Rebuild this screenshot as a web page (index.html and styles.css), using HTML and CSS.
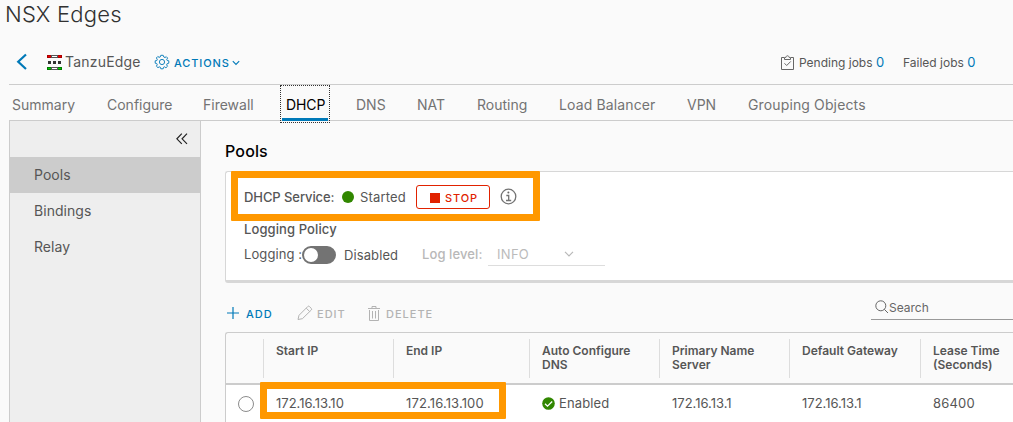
FILE: index.html
```html
<!DOCTYPE html>
<html lang="en">
<head>
<meta charset="utf-8">
<title>NSX Edges</title>
<link rel="stylesheet" href="styles.css">
</head>
<body>
<h1 class="title">NSX Edges</h1>
<header class="toolbar">
  <svg class="back" width="12" height="18" viewBox="0 0 12 18"><path d="M10 1.5 2.2 8.8 10 16" fill="none" stroke="#0079b8" stroke-width="2.2"/></svg>
  <svg class="edge-icon" width="15" height="15" viewBox="0 0 15 15" shape-rendering="crispEdges"><path fill="#a00" d="M0 0h15v3H0z"/><path fill="#e00" d="M1 1h3v1H1zM11 1h3v1h-3z"/><path fill="#555" d="M4 0h7v3H4z"/><path fill="#fff" d="M5 1h5v1H5z"/><path fill="#333" d="M1 6h3v3H1zM6 6h3v3H6zM11 6h3v3h-3z"/><path fill="#070" d="M0 12h15v3H0z"/><path fill="#0c0" d="M1 13h3v1H1zM11 13h3v1h-3z"/><path fill="#555" d="M4 12h7v3H4z"/><path fill="#fff" d="M5 13h5v1H5z"/></svg>
  <span class="edge-name">TanzuEdge</span>
  <svg class="gear" width="16" height="16" viewBox="-8 -8 16 16" fill="none" stroke="#1683bd"><path d="M-1.2-6.7 1.2-6.7 1.8-5 3.1-4.4 4.2-5.4 5.7-3.9 4.7-2.8 5.2-1.5 6.8-1.2 6.8 1.2 5.2 1.6 4.6 3 5.6 4.2 3.9 5.8 2.8 4.8 1.5 5.3 1.2 6.8-1.2 6.8-1.6 5.3-2.8 4.8-4 5.7-5.7 4.1-4.7 2.9-5.3 1.5-6.8 1.2-6.8-1.2-5.2-1.5-4.7-2.8-5.7-4-4.1-5.6-3-4.6-1.7-5.1z"/><circle r="2.6"/></svg>
  <span class="actions">ACTIONS</span>
  <svg class="caret" width="8" height="6" viewBox="0 0 8 6"><path d="M.8 1.2 4 4.4 7.2 1.2" fill="none" stroke="#0079b8" stroke-width="1.1"/></svg>
  <div class="jobs">
    <svg width="13" height="15" viewBox="0 0 13 15" fill="none" stroke="#666"><path d="M3 2.5H.5v12h12v-12H10M3.5 4.5v-2h1.3C5.2.2 7.8.2 8.200 2.500h1.300v2zM3.500 8.300 5.700 10.500 9.800 6.400"/></svg>
    <span class="pending">Pending jobs <b>0</b></span>
    <span class="failed">Failed jobs <b>0</b></span>
  </div>
</header>
<nav class="tabs">
  <a>Summary</a><a>Configure</a><a>Firewall</a><a class="active">DHCP</a><a>DNS</a><a>NAT</a><a>Routing</a><a class="wide">Load Balancer</a><a>VPN</a><a class="wide">Grouping Objects</a>
</nav>
<div class="body">
  <aside class="side">
    <div class="collapse"><svg width="12" height="12" viewBox="0 0 12 12" fill="none" stroke="#222" stroke-width="1.2"><path d="M5.800.700.900 5.800l4.900 5.100M11 .700 6.100 5.800 11 10.900"/></svg></div>
    <a class="selected">Pools</a><a>Bindings</a><a>Relay</a>
  </aside>
  <main class="main">
    <h2>Pools</h2>
    <section class="card">
      <div class="service">
        <span class="service-label">DHCP Service:</span><i class="dot"></i><span class="started">Started</span>
        <button class="stop"><i></i>STOP</button>
        <svg class="info" width="17" height="17" viewBox="0 0 17 17" fill="none" stroke="#737373" stroke-width="1.300"><circle cx="8.500" cy="8.500" r="7.300"/><path d="M6.300 7.500h2.400v5M6 12.500h5.200"/><circle cx="8.400" cy="4.600" r="1" fill="#666" stroke="none"/></svg>
      </div>
      <div class="policy">Logging Policy</div>
      <div class="logging">
        <span class="log-label">Logging :</span><i class="toggle"></i><span class="disabled">Disabled</span>
        <span class="level-label">Log level:</span>
        <span class="select">INFO<svg width="10" height="6" viewBox="0 0 10 6"><path d="M1 .800 5 4.800 9 .800" fill="none" stroke="#b8b8b8" stroke-width="1.200"/></svg></span>
      </div>
    </section>
    <div class="grid-actions">
      <svg class="plus" width="12" height="12" viewBox="0 0 12 12"><path d="M6 0v12M0 6h12" stroke="#0079b8" stroke-width="1.200"/></svg><span class="add">ADD</span>
      <svg class="pencil" width="16" height="16" viewBox="0 0 16 16" fill="none" stroke="#b3b3b3"><path d="M1 14.500 2 10.300 10.800 1.500q.8-.8 1.600 0l1.900 1.900q.8.800 0 1.600L5.400 13.700zM9.300 3.200l3.400 3.400"/></svg><span class="edit">EDIT</span>
      <svg class="trash" width="12" height="15" viewBox="0 0 12 15" fill="none" stroke="#b3b3b3"><path d="M0 2.500h12M4 2V.500h4V2M1.500 4v10.500h9V4M4.500 5v7.500M7.500 5v7.500"/></svg><span class="delete">DELETE</span>
      <div class="search"><svg width="14" height="14" viewBox="0 0 14 14" fill="none" stroke="#666"><circle cx="5.800" cy="5.800" r="5"/><path d="M9.300 9.300 13 13"/></svg>Search</div>
    </div>
    <div class="table">
      <div class="row head">
        <div></div><div>Start IP</div><div>End IP</div><div>Auto Configure<br>DNS</div><div>Primary Name<br>Server</div><div>Default Gateway</div><div>Lease Time<br>(Seconds)</div>
      </div>
      <div class="row data">
        <div class="pick"><i></i></div><div>172.16.13.10</div><div class="range-end">172.16.13.100</div>
        <div class="status"><svg width="13" height="13" viewBox="0 0 13 13"><circle cx="6.500" cy="6.500" r="6.300" fill="#318700"/><path d="M3 6.700 5.500 9.200 10.200 4.500" fill="none" stroke="#fff" stroke-width="1.300"/></svg><span>Enabled</span></div>
        <div>172.16.13.1</div><div>172.16.13.1</div><div class="lease">86400</div>
      </div>
    </div>
  </main>
</div>
<div class="mark mark-service"></div>
<div class="mark mark-range"></div>
</body>
</html>
```
FILE: styles.css
```css
* { box-sizing: border-box; }
body { margin: 0; width: 1013px; height: 422px; overflow: hidden; position: relative; background: #fafafa; color: #565656; font-family: Inter, "Liberation Sans", sans-serif; font-size: 13px; }
svg { display: block; flex: none; }
span, a { white-space: nowrap; }
.title { margin: 0; height: 40px; padding-left: 5px; font-size: 22px; font-weight: 300; line-height: 28px; color: #313131; letter-spacing: .2px; }
.toolbar { height: 45px; margin-left: 9px; border-bottom: 1px solid #ccc; display: flex; align-items: center; }
.back { margin-left: 7px; }
.edge-icon { margin-left: 19px; }
.edge-name { margin: -1px 0 0 3px; width: 75px; font-size: 14px; letter-spacing: .2px; }
.gear { margin-left: 14px; }
.actions { margin: 1px 0 0 4px; width: 56px; font-size: 11px; font-weight: 500; letter-spacing: .9px; color: #0079b8; }
.caret { margin: 1px 0 0 2px; }
.jobs { margin: -1px 36px 0 auto; display: flex; align-items: center; font-size: 12px; }
.jobs svg { margin-top: 1px; }
.jobs b { font-weight: 400; color: #0079b8; font-size: 13px; }
.pending { margin-left: 5px; width: 104px; }
.failed { width: 74px; }
.tabs { height: 36px; margin-left: 9px; padding-left: 3px; border-bottom: 1px solid #ccc; display: grid; grid-template-columns: 95px 96px 77px 76px 61px 60px 82px 128px 61px 130px; line-height: 40px; font-size: 14px; color: #737373; }
.tabs a { height: 35px; }
.tabs .wide { letter-spacing: .13px; }
.tabs .active { width: 50px; height: 38px; padding-left: 5px; color: #000; border: 1px dotted #333; line-height: 38px; letter-spacing: -.1px; background: linear-gradient(#0079b8, #0079b8) 1px 32px / 46px 3px no-repeat; }
.body { display: flex; height: 301px; margin-left: 9px; }
.side { width: 192px; flex: none; border: solid #ccc; border-width: 0 1px; background: #eee; }
.side a { display: block; height: 36px; padding-left: 24px; line-height: 36px; font-size: 14px; letter-spacing: .05px; }
.side .selected { background: #ccc; }
.collapse { height: 36px; display: flex; justify-content: flex-end; padding: 12px 12px 0 0; }
.main { flex: 1; min-width: 0; padding-left: 24px; }
h2 { margin: 0; height: 50px; padding-top: 20px; font-size: 16px; font-weight: 500; line-height: 20px; color: #000; letter-spacing: .15px; }
.card { height: 112px; border: 1px solid #d7d7d7; border-width: 1px 0 3px 1px; border-radius: 3px 0 0 3px; background: #fff; padding: 7px 0 0 18px; }
.service { height: 36px; display: flex; align-items: center; }
.service-label { width: 98px; font-weight: 500; letter-spacing: -.08px; }
.service span { margin-top: -1px; }
.dot { width: 12px; height: 12px; border-radius: 50%; background: #318700; }
.started { width: 56px; margin-left: 6px; letter-spacing: .15px; }
.stop { width: 74px; height: 24px; padding: 1px 0 0 13px; border: 1px solid #e12200; border-radius: 3px; background: transparent; color: #e12200; display: flex; align-items: center; font: 500 11px Inter, sans-serif; letter-spacing: .9px; }
.stop i { width: 10px; height: 10px; background: #e12200; margin-right: 5px; }
.info { margin: -2px 0 0 10px; }
.policy { margin-top: 5px; height: 20px; line-height: 18px; font-weight: 500; letter-spacing: .1px; }
.logging { display: flex; align-items: center; height: 30px; }
.log-label { width: 57px; margin-top: -3px; letter-spacing: .1px; }
.toggle { width: 34px; height: 18px; margin-left: 1px; border: 2px solid #737373; border-radius: 9px; background: #737373; }
.toggle::before { content: ""; display: block; width: 14px; height: 14px; border-radius: 50%; background: #fff; }
.disabled { margin-left: 8px; width: 78px; letter-spacing: .1px; }
.level-label { width: 66px; margin-top: -3px; color: #b8b8b8; font-weight: 500; letter-spacing: .1px; }
.select { width: 117px; height: 24px; margin-top: -2px; padding-left: 9px; display: flex; align-items: center; border-bottom: 1px solid #ddd; color: #bbb; letter-spacing: .3px; }
.select svg { margin-left: 35px; }
.grid-actions { height: 49px; padding: 12px 0 0 2px; display: flex; align-items: center; font-size: 11px; font-weight: 500; letter-spacing: 1px; color: #b3b3b3; }
.grid-actions span { margin-top: 1px; }
.plus, .pencil, .trash { margin-top: -1px; }
.add { color: #0079b8; width: 51px; margin-left: 7px; }
.edit { width: 51px; margin-left: 4px; }
.delete { margin-left: 6px; }
.search { align-self: flex-start; margin-left: auto; width: 142px; height: 25px; padding-left: 4px; display: flex; align-items: center; border-bottom: 1px solid #999; font-size: 12px; font-weight: 400; letter-spacing: 0; color: #666; }
.table { border: 1px solid #ccc; border-width: 1px 0 0 1px; border-radius: 3px 0 0; height: 90px; }
.row { display: grid; grid-template-columns: 37px 130px 136px 130px 130px 131px 93px; }
.head { height: 52px; padding-top: 6px; border-bottom: 2px solid #ccc; font-size: 12px; font-weight: 600; line-height: 14px; }
.head div { height: 39px; padding: 5px 0 0 12px; border-left: 1px solid #ddd; white-space: nowrap; }
.head div:first-child { border: 0; }
.data { background: #fff; height: 37px; align-items: center; }
.data div { height: 37px; padding-left: 13px; line-height: 37px; }
.data .pick { display: flex; align-items: center; }
.pick i { display: block; flex: none; width: 16px; height: 16px; border: 1px solid #8c8c8c; border-radius: 50%; margin-left: -1px; }
.data .range-end { letter-spacing: .13px; }
.data .lease { letter-spacing: .2px; }
.status { display: flex; align-items: center; letter-spacing: .13px; }
.status svg { margin-right: 4px; }
.mark { position: absolute; border: 7px solid #ff9800; border-radius: 1px; }
.mark-service { left: 231px; top: 171px; width: 309px; height: 50px; }
.mark-range { left: 260px; top: 382px; width: 246px; height: 37px; }
```
